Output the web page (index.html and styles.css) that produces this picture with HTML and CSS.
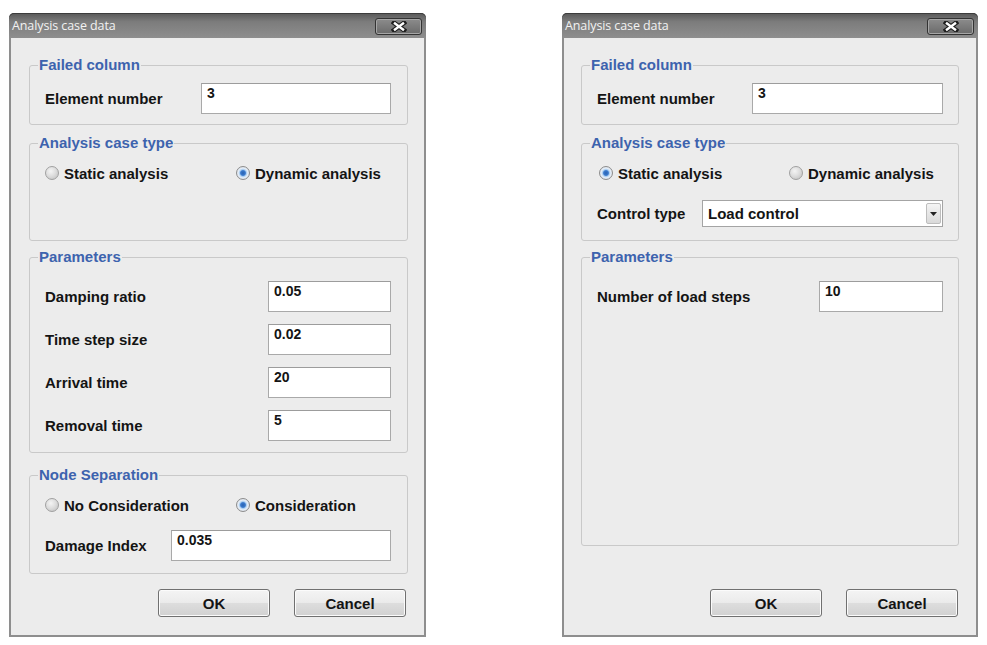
FILE: index.html
```html
<!DOCTYPE html>
<html lang="en">
<head>
<meta charset="utf-8">
<title>Analysis case data</title>
<link rel="stylesheet" href="styles.css">
</head>
<body>
<div class="page">
  <section class="dialog dialog-left">
    <header class="titlebar">
      <span class="title">Analysis case data</span>
      <button class="close" type="button" aria-label="Close">
        <svg width="16" height="11" viewBox="0 0 16 11"><line x1="3" y1="1.8" x2="13" y2="9.2" stroke="#1e1e1e" stroke-width="4.6" stroke-linecap="square"/><line x1="13" y1="1.8" x2="3" y2="9.2" stroke="#1e1e1e" stroke-width="4.6" stroke-linecap="square"/><line x1="3" y1="1.8" x2="13" y2="9.2" stroke="#fff" stroke-width="2.4"/><line x1="13" y1="1.8" x2="3" y2="9.2" stroke="#fff" stroke-width="2.4"/></svg>
      </button>
    </header>
    <div class="client">
      <fieldset class="group g-failed">
        <legend>Failed column</legend>
        <div class="content c-failed">
          <div class="row"><span class="label">Element number</span><input class="field w-element" type="text" value="3" readonly></div>
        </div>
      </fieldset>
      <fieldset class="group g-type">
        <legend>Analysis case type</legend>
        <div class="content c-type">
          <div class="radios">
            <span class="radio"><span class="dot"></span>Static analysis</span>
            <span class="radio"><span class="dot on"></span>Dynamic analysis</span>
          </div>
        </div>
      </fieldset>
      <fieldset class="group g-params">
        <legend>Parameters</legend>
        <div class="content c-params">
          <div class="row"><span class="label">Damping ratio</span><input class="field w-param" type="text" value="0.05" readonly></div>
          <div class="row"><span class="label">Time step size</span><input class="field w-param" type="text" value="0.02" readonly></div>
          <div class="row"><span class="label">Arrival time</span><input class="field w-param" type="text" value="20" readonly></div>
          <div class="row"><span class="label">Removal time</span><input class="field w-param" type="text" value="5" readonly></div>
        </div>
      </fieldset>
      <fieldset class="group g-node">
        <legend>Node Separation</legend>
        <div class="content c-node">
          <div class="radios">
            <span class="radio"><span class="dot"></span>No Consideration</span>
            <span class="radio"><span class="dot on"></span>Consideration</span>
          </div>
          <div class="row"><span class="label">Damage Index</span><input class="field w-damage" type="text" value="0.035" readonly></div>
        </div>
      </fieldset>
      <div class="buttons">
        <button class="btn" type="button">OK</button>
        <button class="btn" type="button">Cancel</button>
      </div>
    </div>
  </section>

  <section class="dialog dialog-right">
    <header class="titlebar">
      <span class="title">Analysis case data</span>
      <button class="close" type="button" aria-label="Close">
        <svg width="16" height="11" viewBox="0 0 16 11"><line x1="3" y1="1.8" x2="13" y2="9.2" stroke="#1e1e1e" stroke-width="4.6" stroke-linecap="square"/><line x1="13" y1="1.8" x2="3" y2="9.2" stroke="#1e1e1e" stroke-width="4.6" stroke-linecap="square"/><line x1="3" y1="1.8" x2="13" y2="9.2" stroke="#fff" stroke-width="2.4"/><line x1="13" y1="1.8" x2="3" y2="9.2" stroke="#fff" stroke-width="2.4"/></svg>
      </button>
    </header>
    <div class="client">
      <fieldset class="group g-failed">
        <legend>Failed column</legend>
        <div class="content c-failed">
          <div class="row"><span class="label">Element number</span><input class="field w-element" type="text" value="3" readonly></div>
        </div>
      </fieldset>
      <fieldset class="group g-type">
        <legend>Analysis case type</legend>
        <div class="content c-type">
          <div class="radios">
            <span class="radio"><span class="dot on"></span>Static analysis</span>
            <span class="radio"><span class="dot"></span>Dynamic analysis</span>
          </div>
          <div class="row row-select"><span class="label">Control type</span>
            <div class="select"><span class="select-text">Load control</span><span class="select-arrow"><svg width="7" height="4" viewBox="0 0 7 4"><path d="M0 0H7L3.5 4Z" fill="#222"/></svg></span></div>
          </div>
        </div>
      </fieldset>
      <fieldset class="group g-params g-params-right">
        <legend>Parameters</legend>
        <div class="content c-params">
          <div class="row"><span class="label">Number of load steps</span><input class="field w-param" type="text" value="10" readonly></div>
        </div>
      </fieldset>
      <div class="buttons">
        <button class="btn" type="button">OK</button>
        <button class="btn" type="button">Cancel</button>
      </div>
    </div>
  </section>
</div>
</body>
</html>
```

FILE: styles.css
```css
html, body {
  margin: 0;
  background: #ffffff;
}
body {
  font-family: "Liberation Sans", Arial, sans-serif;
  color: #141414;
}
.page {
  display: flex;
  gap: 136px;
  padding: 13px 0 0 9px;
}
.dialog {
  display: flex;
  flex-direction: column;
  height: 624px;
  box-sizing: border-box;
}
.dialog-left { width: 417px; }
.dialog-right { width: 416px; }

.titlebar {
  height: 25px;
  flex: none;
  box-sizing: border-box;
  display: flex;
  justify-content: space-between;
  align-items: flex-start;
  padding: 0 4px 0 3px;
  background: linear-gradient(#585858, #7c7c7c 35%, #8e8e8e 100%);
  border-radius: 5px 5px 0 0;
  box-shadow: inset 0 1px 0 #3c3c3c;
}
.title {
  font-family: "Open Sans", "Noto Sans", sans-serif;
  font-size: 12.5px;
  line-height: 25px;
  color: #f2f2f2;
  letter-spacing: -0.1px;
}
.close {
  margin-top: 5px;
  width: 47px;
  height: 17px;
  padding: 0;
  box-sizing: border-box;
  border: 1px solid #333333;
  border-radius: 3px;
  background: linear-gradient(#8c8c8c, #6a6a6a);
  box-shadow: inset 0 0 0 1px #a6a6a6;
  display: flex;
  align-items: center;
  justify-content: center;
}

.client {
  flex: 1;
  display: flex;
  flex-direction: column;
  background: #ececec;
  border: 2px solid #8e8e8e;
  border-top: none;
  padding: 18px 16px 18px 18px;
}
.dialog-right .client {
  padding: 18px 17px 18px 17px;
}

.group {
  flex: none;
  margin: 0;
  padding: 0;
  min-width: 0;
  border: 1px solid #c9c9c9;
  border-radius: 3px;
}
.group legend {
  margin-left: 8px;
  padding: 0 1px;
  font-size: 15px;
  font-weight: bold;
  line-height: 18px;
  color: #3d63ae;
}
.g-type { margin-top: 9px; }
.g-params { margin-top: 7px; }
.g-node { margin-top: 13px; }
.g-params-right { height: 298px; box-sizing: border-box; }

.content {
  display: flex;
  flex-direction: column;
  padding-left: 15px;
  padding-right: 16px;
}
.dialog-right .content { padding-right: 15px; }
.c-failed { padding-top: 9px; padding-bottom: 10px; }
.c-type { padding-top: 11px; padding-bottom: 13px; min-height: 64px; gap: 17px; }
.c-params { padding-top: 15px; padding-bottom: 11px; gap: 12px; }
.c-node { padding-top: 11px; padding-bottom: 12px; gap: 15px; }

.row {
  flex: none;
  display: flex;
  justify-content: space-between;
  align-items: center;
  height: 31px;
}
.row-select { height: 27px; }
.label {
  font-size: 15px;
  font-weight: bold;
  color: #141414;
}

.field {
  box-sizing: border-box;
  height: 31px;
  margin: 0;
  border: 1px solid #a9a9a9;
  border-top-color: #9c9c9c;
  background: #ffffff;
  padding: 0 4px 11px 5px;
  font-family: "Liberation Sans", Arial, sans-serif;
  font-size: 14px;
  font-weight: bold;
  color: #141414;
  outline: none;
}
.w-element { width: 190px; }
.dialog-right .w-element { width: 191px; }
.w-param { width: 123px; }
.dialog-right .w-param { width: 124px; }
.w-damage { width: 220px; }

.radios {
  flex: none;
  display: grid;
  grid-template-columns: 191px auto;
  height: 20px;
  align-items: center;
}
.dialog-right .radios { grid-template-columns: 190px auto; padding-left: 2px; }
.radio {
  display: flex;
  align-items: center;
  font-size: 15px;
  font-weight: bold;
  color: #141414;
}
.dot {
  width: 14px;
  height: 14px;
  box-sizing: border-box;
  border-radius: 50%;
  border: 1px solid #a0a0a0;
  background: radial-gradient(circle at 40% 35%, #f4f4f4 0, #dedede 45%, #bdbdbd 100%);
  margin-right: 5px;
  flex: none;
}
.dot.on {
  background:
    radial-gradient(circle at 50% 50%, #2a62b0 0, #3a7ace 2.4px, #a9cdf0 3.4px, #e6eef8 4.8px, #cfcfcf 100%);
  border-color: #8c8c8c;
}

.select {
  width: 241px;
  height: 27px;
  box-sizing: border-box;
  border: 1px solid #a4a4a4;
  background: #ffffff;
  display: flex;
  align-items: center;
  justify-content: space-between;
  padding: 0 1px 0 5px;
}
.select-text {
  font-size: 15px;
  font-weight: bold;
  color: #141414;
}
.select-arrow {
  width: 15px;
  height: 21px;
  box-sizing: border-box;
  border: 1px solid #bdbdbd;
  border-radius: 2px;
  background: linear-gradient(#f4f4f4, #d9d9d9);
  display: flex;
  align-items: center;
  justify-content: center;
}

.buttons {
  flex: none;
  margin-top: auto;
  display: flex;
  justify-content: flex-end;
  gap: 24px;
  padding-right: 2px;
}
.dialog-right .buttons { padding-right: 1px; }
.btn {
  width: 112px;
  height: 28px;
  box-sizing: border-box;
  border: 1px solid #707070;
  border-radius: 3px;
  background: linear-gradient(#f4f4f4 0%, #ebebeb 48%, #dddddd 52%, #d1d1d1 100%);
  box-shadow: inset 0 0 0 1px #fbfbfb;
  font-family: "Liberation Sans", Arial, sans-serif;
  font-size: 15px;
  font-weight: bold;
  color: #141414;
  padding: 0;
}
```
